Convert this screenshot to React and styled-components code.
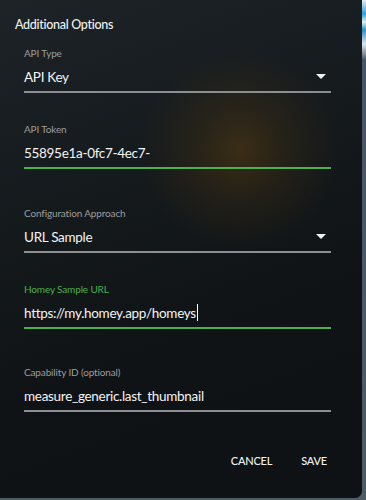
import React from "react";
import styled, { createGlobalStyle } from "styled-components";

const Global = createGlobalStyle`
  html, body { margin: 0; padding: 0; }
  body {
    width: 366px;
    height: 500px;
    overflow: hidden;
    background: linear-gradient(180deg, #e8eef2 0px, #2f9fd6 14px, #e8eef2 22px, #2a8fc8 30px, #dfe6ea 44px, #46566a 60px, #4d5d66 100%);
    font-family: "Lato", "Noto Sans", sans-serif;
  }
`;

const Dialog = styled.div`
  position: relative;
  width: 362px;
  height: 498px;
  box-sizing: border-box;
  border-bottom-right-radius: 7px;
  overflow: hidden;
  background:
    radial-gradient(circle at 240px 150px, rgba(110, 72, 12, 0.42) 0px, rgba(90, 60, 12, 0.22) 48px, rgba(60, 40, 10, 0) 100px),
    linear-gradient(160deg, #1d2327 0%, #151a1d 35%, #0f1315 65%, #0e1214 100%);
  display: flex;
  flex-direction: column;
`;

const Title = styled.h2`
  margin: 0;
  padding: 15px 0 0 15px;
  font-size: 12.5px;
  letter-spacing: -0.3px;
  line-height: 20px;
  font-weight: 500;
  color: #f2f2f2;
`;

const Content = styled.div`
  padding: 11px 31px 0 24px;
  display: flex;
  flex-direction: column;
`;

const Field = styled.div`
  display: flex;
  flex-direction: column;
  margin-bottom: ${(p) => p.$after}px;
`;

const Label = styled.div`
  font-size: 10px;
  letter-spacing: -0.15px;
  line-height: 14px;
  color: ${(p) => (p.$focused ? "#4cb051" : "#9a9da0")};
`;

const ValueRow = styled.div`
  height: 31px;
  display: flex;
  align-items: center;
  justify-content: space-between;
  padding-top: 2px;
  box-sizing: border-box;
`;

const Value = styled.span`
  font-size: 13.5px;
  letter-spacing: -0.3px;
  color: #f4f4f4;
  display: flex;
  align-items: center;
`;

const Caret = styled.span`
  display: inline-block;
  width: 1px;
  height: 17px;
  margin-left: 1px;
  background: #ffffff;
`;

const Underline = styled.div`
  height: 2px;
  background: ${(p) => (p.$active ? "#4cb051" : "#8c8f91")};
`;

const Arrow = styled.svg`
  width: 10px;
  height: 5px;
  margin-right: 5px;
`;

const Actions = styled.div`
  display: flex;
  justify-content: flex-end;
  gap: 13px;
  padding: 36px 27px 0 0;
`;

const Button = styled.button`
  background: none;
  border: none;
  padding: 6px 8px;
  font-family: "Lato", "Noto Sans", sans-serif;
  font-size: 11px;
  font-weight: 500;
  letter-spacing: -0.2px;
  color: #f2f2f2;
  text-transform: uppercase;
  cursor: pointer;
`;

function DropArrow() {
  return (
    <Arrow viewBox="0 0 10 5">
      <path d="M0 0 L10 0 L5 5 Z" fill="#f0f0f0" />
    </Arrow>
  );
}

function FormField({ label, value, select, focused, valid, caret, after }) {
  return (
    <Field $after={after}>
      <Label $focused={focused}>{label}</Label>
      <ValueRow>
        <Value>
          {value}
          {caret && <Caret />}
        </Value>
        {select && <DropArrow />}
      </ValueRow>
      <Underline $active={focused || valid} />
    </Field>
  );
}

export default function App() {
  return (
    <>
      <Global />
      <Dialog>
        <Title>Additional Options</Title>
        <Content>
          <FormField label="API Type" value="API Key" select after={29} />
          <FormField label="API Token" value="55895e1a-0fc7-4ec7-" valid after={37} />
          <FormField label="Configuration Approach" value="URL Sample" select after={29} />
          <FormField label="Homey Sample URL" value="https://my.homey.app/homeys" focused caret after={36} />
          <FormField label="Capability ID (optional)" value="measure_generic.last_thumbnail" after={0} />
        </Content>
        <Actions>
          <Button>Cancel</Button>
          <Button>Save</Button>
        </Actions>
      </Dialog>
    </>
  );
}
